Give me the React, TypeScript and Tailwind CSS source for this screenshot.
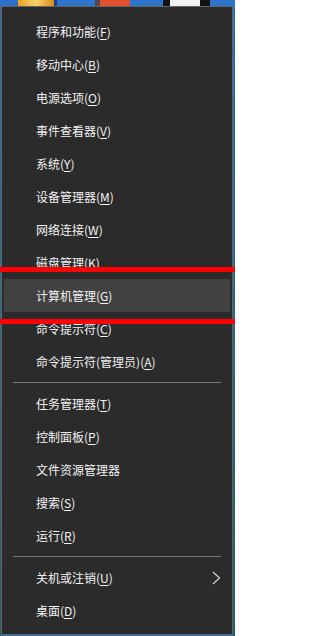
import React from "react";

type Item = { label: string; key?: string; suffix?: string; arrow?: boolean; active?: boolean };

const groups: Item[][] = [
  [
    { label: "程序和功能", key: "F" },
    { label: "移动中心", key: "B" },
    { label: "电源选项", key: "O" },
    { label: "事件查看器", key: "V" },
    { label: "系统", key: "Y" },
    { label: "设备管理器", key: "M" },
    { label: "网络连接", key: "W" },
    { label: "磁盘管理", key: "K" },
    { label: "计算机管理", key: "G", active: true },
    { label: "命令提示符", key: "C" },
    { label: "命令提示符(管理员)", key: "A" },
  ],
  [
    { label: "任务管理器", key: "T" },
    { label: "控制面板", key: "P" },
    { label: "文件资源管理器" },
    { label: "搜索", key: "S" },
    { label: "运行", key: "R" },
  ],
  [
    { label: "关机或注销", key: "U", arrow: true },
    { label: "桌面", key: "D" },
  ],
];

function Row({ item }: { item: Item }) {
  return (
    <div
      className={`mx-[2px] flex h-[33px] items-center justify-between pl-[32px] pr-[9px] ${
        item.active ? "bg-[#414141]" : ""
      }`}
    >
      <span className="text-[12px] leading-none text-[#f2f2f2]">
        {item.label}
        {item.key && (
          <>
            (<u className="underline-offset-[2px]">{item.key}</u>)
          </>
        )}
      </span>
      {item.arrow && (
        <svg width="9" height="14" viewBox="0 0 9 14" className="text-[#d8d8d8]">
          <polyline points="1,1 7.5,7 1,13" fill="none" stroke="currentColor" strokeWidth="1.1" />
        </svg>
      )}
    </div>
  );
}

export default function App() {
  return (
    <div
      className="relative h-[636px] w-[235px] overflow-hidden bg-[#2a6ec4]"
      style={{ fontFamily: '"Noto Sans CJK SC", "Microsoft YaHei", sans-serif' }}
    >
      {/* wallpaper peeking above the menu */}
      <div className="flex h-[6px]">
        <div className="w-[18px] bg-[#2c70c6]" />
        <div className="w-[36px] bg-gradient-to-r from-[#e8a31c] via-[#f6d36a] to-[#d98e14]" />
        <div className="w-[3px] bg-[#1b3f86]" />
        <div className="w-[38px] bg-[#2f74cb]" />
        <div className="w-[5px] bg-[#5a4450]" />
        <div className="w-[30px] bg-[#e0522c]" />
        <div className="w-[33px] bg-[#2f74cb]" />
        <div className="w-[7px] bg-[#111]" />
        <div className="w-[30px] bg-[#f4f4f4]" />
        <div className="w-[10px] bg-[#111]" />
        <div className="flex-1 bg-[#2f74cb]" />
      </div>

      <div className="flex h-[630px]">
        <div className="w-[1px] bg-gradient-to-b from-[#2d6fb8] to-[#24606a]" />
        <div className="flex h-[629px] w-[232px] flex-col border border-[#646464] bg-[#2b2b2b] pt-[8px]">
          {groups.map((g, gi) => (
            <div key={gi}>
              {gi > 0 && <div className="mx-[11px] my-[4px] h-px bg-[#7a7a7a]" />}
              {g.map((it) => (
                <Row key={it.label} item={it} />
              ))}
            </div>
          ))}
        </div>
        <div className="flex-1 bg-gradient-to-b from-[#2d6fb8] to-[#1f5d66]" />
      </div>

      {/* red annotation marks */}
      <div className="absolute left-0 top-[267px] h-[5px] w-full bg-[#ff0000]" />
      <div className="absolute left-0 top-[319px] h-[5px] w-full bg-[#ff0000]" />
    </div>
  );
}
